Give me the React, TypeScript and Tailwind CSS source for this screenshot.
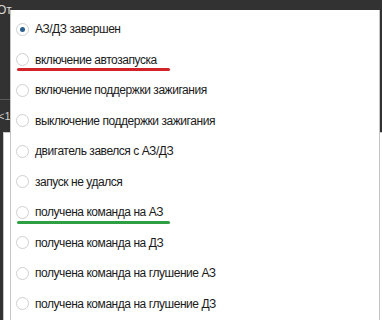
import React from 'react';

const ITEMS = [
  'АЗ/ДЗ завершен',
  'включение автозапуска',
  'включение поддержки зажигания',
  'выключение поддержки зажигания',
  'двигатель завелся с АЗ/ДЗ',
  'запуск не удался',
  'получена команда на АЗ',
  'получена команда на ДЗ',
  'получена команда на глушение АЗ',
  'получена команда на глушение ДЗ',
];

// пометки поверх пунктов (красная / зелёная)
const MARKS: Record<number, string> = {
  1: 'bg-[#d2232a]',
  6: 'bg-[#2ea043]',
};

function Radio({ checked }: { checked: boolean }) {
  return (
    <span className="flex size-[13px] shrink-0 items-center justify-center rounded-full border border-[#cfcfcf] bg-white">
      {checked && <span className="size-[5px] rounded-full bg-[#2a5f8f]" />}
    </span>
  );
}

export default function App() {
  return (
    <div
      className="relative h-[320px] w-[382px] overflow-hidden bg-[#323232]"
      style={{ fontFamily: '"Liberation Sans", Arial, sans-serif' }}
    >
      {/* фон под выпадающим списком */}
      <div className="flex h-full flex-col">
        <div className="ml-[-3px] mt-[4px] text-[12px] leading-none text-[#d8d8d8]">От</div>
        <div className="mt-[83px] h-px w-[12px] bg-[#5a5a5a]" />
        <div className="ml-[-2px] mt-[11px] text-[11px] leading-none text-[#cfcfcf]">&lt;1</div>
        <div className="mb-[-4px] ml-[3px] mr-[-4px] mt-[10px] flex-1 border border-[#c8c8c8] bg-white" />
      </div>

      {/* выпадающий список */}
      <div className="absolute left-[10px] top-[10px] bottom-[-20px] w-[370px] border-l border-r border-[#c4c4c4] bg-white pt-[4px]">
        {ITEMS.map((label, i) => (
          <div key={label} className="relative flex h-[30.5px] items-center gap-[6px] pl-[5px]">
            <Radio checked={i === 0} />
            <span className="whitespace-nowrap text-[12px] tracking-[-0.45px] text-[#1a1a1a]">{label}</span>
            {MARKS[i] && (
              <span className={`absolute bottom-[4px] left-[6px] h-[3px] w-[153px] rounded-full ${MARKS[i]}`} />
            )}
          </div>
        ))}
      </div>
    </div>
  );
}
